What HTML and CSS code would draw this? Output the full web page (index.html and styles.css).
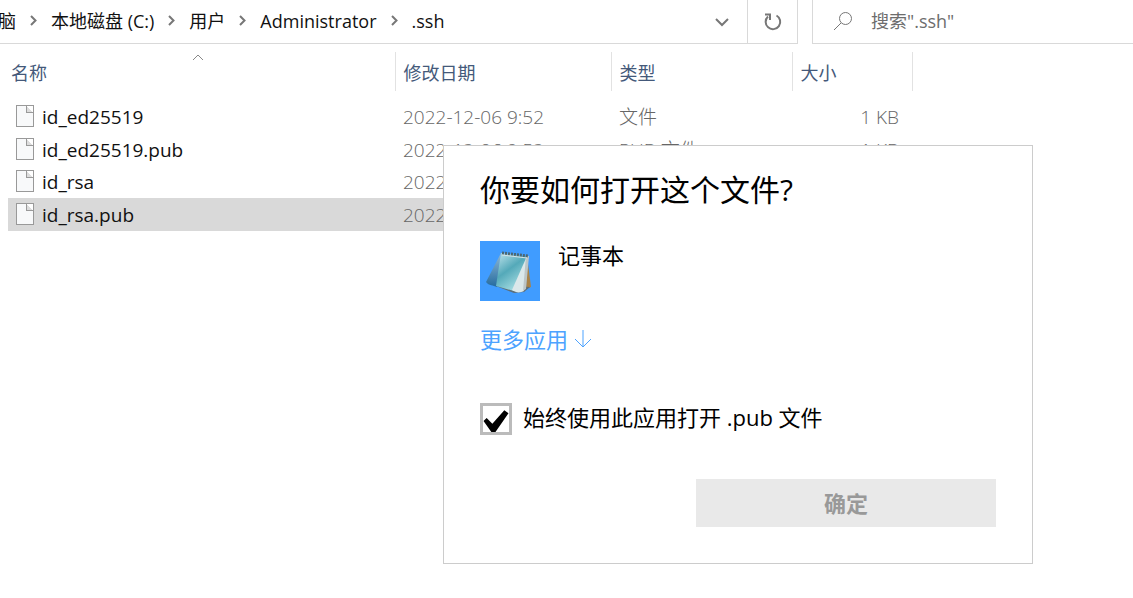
FILE: index.html
```html
<!DOCTYPE html>
<html lang="zh-CN">
<head>
    <meta charset="UTF-8">
    <meta name="viewport" content="width=device-width, initial-scale=1.0">
    <title>.ssh</title>
    <link rel="stylesheet" href="styles.css">
</head>
<body>
    <header class="toolbar">
        <div class="address">
            <nav class="crumbs">
                <a href="#">脑</a>
                <svg width="7" height="12" viewBox="0 0 7 12"><path d="M1 1l4.5 4.5L1 10"/></svg>
                <a href="#">本地磁盘 (C:)</a>
                <svg width="7" height="12" viewBox="0 0 7 12"><path d="M1 1l4.5 4.5L1 10"/></svg>
                <a href="#">用户</a>
                <svg width="7" height="12" viewBox="0 0 7 12"><path d="M1 1l4.5 4.5L1 10"/></svg>
                <a href="#">Administrator</a>
                <svg width="7" height="12" viewBox="0 0 7 12"><path d="M1 1l4.5 4.5L1 10"/></svg>
                <a href="#">.ssh</a>
            </nav>
            <button class="history" aria-label="历史记录">
                <svg width="14" height="10" viewBox="0 0 14 10"><path d="M1 2l6 6 6-6"/></svg>
            </button>
            <button class="refresh" aria-label="刷新">
                <svg width="20" height="20" viewBox="0 0 20 20"><path d="M13.5 3.5A7.3 7.3 0 1 1 5 4.5M2 2.5h5v5.5"/></svg>
            </button>
        </div>
        <div class="search">
            <svg width="20" height="20" viewBox="0 0 20 20"><circle cx="12.5" cy="7.5" r="6"/><path d="M8 12l-7 7"/></svg>
            <input type="text" aria-label="搜索" placeholder='搜索".ssh"'>
        </div>
    </header>

    <main>
        <table class="files">
            <colgroup>
                <col class="col-name">
                <col class="col-date">
                <col class="col-type">
                <col class="col-size">
            </colgroup>
            <thead>
                <tr>
                    <th class="sorted">名称
                        <svg width="12" height="7" viewBox="0 0 12 7"><path d="M1 6l5-5 5 5"/></svg>
                    </th>
                    <th>修改日期</th>
                    <th>类型</th>
                    <th>大小</th>
                </tr>
            </thead>
            <tbody>
                <tr>
                    <td><span class="file"><i class="page"></i>id_ed25519</span></td>
                    <td>2022-12-06 9:52</td>
                    <td>文件</td>
                    <td>1 KB</td>
                </tr>
                <tr>
                    <td><span class="file"><i class="page"></i>id_ed25519.pub</span></td>
                    <td>2022-12-06 9:52</td>
                    <td>PUB 文件</td>
                    <td>1 KB</td>
                </tr>
                <tr>
                    <td><span class="file"><i class="page"></i>id_rsa</span></td>
                    <td>2022</td>
                    <td></td>
                    <td></td>
                </tr>
                <tr class="selected">
                    <td><span class="file"><i class="page"></i>id_rsa.pub</span></td>
                    <td>2022</td>
                    <td></td>
                    <td></td>
                </tr>
            </tbody>
        </table>
    </main>

    <form class="dialog">
        <h1>你要如何打开这个文件?</h1>
        <div class="app">
            <svg width="60" height="60" viewBox="0 0 60 60">
                <defs>
                    <linearGradient id="sheet" x1="0" y1="0" x2="0.6" y2="1">
                        <stop offset="0" stop-color="#c4e6ee"/>
                        <stop offset="0.5" stop-color="#54a9b9"/>
                        <stop offset="1" stop-color="#a9dfe4"/>
                    </linearGradient>
                    <linearGradient id="fold" x1="0" y1="0" x2="0" y2="1">
                        <stop offset="0" stop-color="#8fb9d6"/>
                        <stop offset="1" stop-color="#256b9f"/>
                    </linearGradient>
                </defs>
                <rect width="60" height="60" fill="#409cff"/>
                <path d="M47 15l4 31-5 2z" fill="#a98348"/>
                <path d="M21 12L6 41c3 4 7 3 11 5z" fill="url(#fold)"/>
                <path d="M16 45l18 7 10-1 6-5-17-1z" fill="#5d6f79"/>
                <path d="M21 12l26 3-4 34-9 1-18-5z" fill="url(#sheet)"/>
                <path d="M47 15L32 49c4 3 8 3 12 1z" fill="#dbe8ea"/>
                <path d="M46 15l3 0-3 33-3 2z" fill="#bcc6c8"/>
                <path d="M22 12l26 3" stroke="#4c6672" stroke-width="3" stroke-dasharray="2 1" fill="none"/>
                <path d="M22 14l25 3" stroke="#d7e3e6" stroke-width="1" fill="none"/>
            </svg>
            <span>记事本</span>
        </div>
        <a class="more" href="#">更多应用
            <svg width="18" height="20" viewBox="0 0 18 20"><path d="M9 1v17M1 10l8 8 8-8"/></svg>
        </a>
        <div class="always">
            <input type="checkbox" id="always" checked>
            <label for="always">始终使用此应用打开 .pub 文件</label>
        </div>
        <button class="ok" type="submit" disabled>确定</button>
    </form>
</body>
</html>
```

FILE: styles.css
```css
* { box-sizing: border-box; }
body {
  margin: 0;
  font-family: "Open Sans", "Noto Sans CJK SC", sans-serif;
  font-size: 18px;
  line-height: 24px;
  color: #111;
  background-color: #fff;
}
a { color: inherit; text-decoration: none; }
button { padding: 0; border: none; background: none; font: inherit; }
svg { flex: none; fill: none; }

/* address bar */
.toolbar { display: flex; gap: 14px; height: 44px; }
.address {
  display: flex;
  flex: 1;
  border: solid #d9d9d9;
  border-width: 0 1px 1px 0;
}
.crumbs {
  display: flex;
  flex: 1;
  align-items: center;
  gap: 14px;
  margin-left: -2px;
  padding-bottom: 2px;
  white-space: nowrap;
}
.crumbs svg { stroke: #777; stroke-width: 2; }
.history, .refresh { display: flex; align-items: center; justify-content: center; width: 50px; }
.history svg, .refresh svg { stroke: #777; stroke-width: 2; }
.refresh { border-left: 1px solid #d9d9d9; }
.search {
  display: flex;
  width: 321px;
  align-items: center;
  gap: 18px;
  padding-left: 20px;
  padding-bottom: 2px;
  border: solid #d9d9d9;
  border-width: 0 0 1px 1px;
}
.search svg { stroke: #777; stroke-width: 1; }
.search input {
  flex: 1;
  min-width: 0;
  padding: 0;
  border: none;
  outline: none;
  font: inherit;
}
.search input::placeholder { color: #6d6d6d; opacity: 1; }

/* file list */
main { padding: 8px 8px 0; }
.files { table-layout: fixed; width: 904px; border-collapse: collapse; }
.col-name { width: 387px; }
.col-date { width: 216px; }
.col-type { width: 181px; }
.col-size { width: 120px; }
.files th {
  position: relative;
  height: 39px;
  padding: 2px 8px 0;
  border-right: 1px solid #e2e2e2;
  color: #44597a;
  font-weight: 400;
  text-align: left;
}
.files .sorted { padding-left: 3px; }
.sorted svg { position: absolute; left: 184px; top: 2px; stroke: #888; }
.files tbody::before { content: ""; display: block; height: 10px; }
.files td { height: 32px; padding: 0 8px; color: #666; font-size: 19px; font-weight: 300; }
.files tr:nth-child(even) td { height: 33px; }
.files td:first-child { color: #111; font-weight: 400; }
.files td:last-child { padding-right: 13px; text-align: right; }
.selected { background-color: #d9d9d9; }
.file { display: flex; align-items: center; gap: 8px; }
.page {
  position: relative;
  width: 18px;
  height: 22px;
  margin-top: -2px;
  border: 1px solid #999;
  background-color: #f8f9fa;
}
.page::after {
  content: "";
  position: absolute;
  top: -1px;
  right: -1px;
  width: 6px;
  height: 6px;
  border: 1px solid #999;
  background: linear-gradient(45deg, #ddd 50%, #fff 50%);
}

/* open-with dialog */
.dialog {
  position: absolute;
  left: 443px;
  top: 145px;
  width: 590px;
  padding: 24px 36px 36px;
  border: 1px solid #ccc;
  background-color: #fff;
  color: #000;
  font-size: 22px;
  line-height: 28px;
}
.dialog h1 { margin: 0; font-size: 30px; font-weight: 400; line-height: 40px; }
.app { display: flex; gap: 18px; margin-top: 31px; }
.more { display: flex; align-items: center; gap: 6px; margin-top: 24px; color: #4da3ff; }
.more svg { stroke: #4da3ff; stroke-width: 1; }
.always { display: flex; gap: 11px; margin-top: 50px; }
.always input {
  display: grid;
  appearance: none;
  width: 32px;
  height: 32px;
  margin: 0;
  border: 3px solid #bbb;
}
.always input:checked::before {
  content: "";
  background-color: #000;
  clip-path: polygon(2% 58%, 14% 46%, 36% 68%, 82% 16%, 98% 28%, 48% 100%, 32% 100%);
}
.ok {
  display: block;
  width: 300px;
  height: 48px;
  margin: 44px 0 0 auto;
  background-color: #e9e9e9;
  color: #999;
  font-weight: 700;
}
```
